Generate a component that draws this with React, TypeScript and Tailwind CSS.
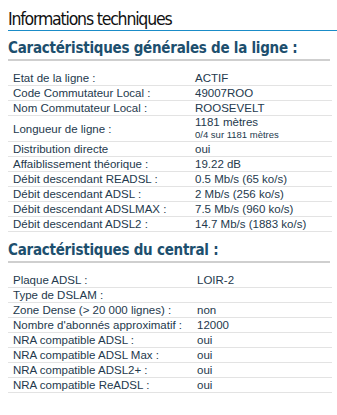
const ligne: [string, React.ReactNode][] = [
  ["Etat de la ligne :", "ACTIF"],
  ["Code Commutateur Local :", "49007ROO"],
  ["Nom Commutateur Local :", "ROOSEVELT"],
  [
    "Longueur de ligne :",
    <div className="leading-[13px]">
      <div>1181 mètres</div>
      <div className="text-[9.5px] leading-[12px]">0/4 sur 1181 mètres</div>
    </div>,
  ],
  ["Distribution directe", "oui"],
  ["Affaiblissement théorique :", "19.22 dB"],
  ["Débit descendant READSL :", "0.5 Mb/s (65 ko/s)"],
  ["Débit descendant ADSL :", "2 Mb/s (256 ko/s)"],
  ["Débit descendant ADSLMAX :", "7.5 Mb/s (960 ko/s)"],
  ["Débit descendant ADSL2 :", "14.7 Mb/s (1883 ko/s)"],
];

const central: [string, React.ReactNode][] = [
  ["Plaque ADSL :", "LOIR-2"],
  ["Type de DSLAM :", ""],
  ["Zone Dense (> 20 000 lignes) :", "non"],
  ["Nombre d'abonnés approximatif :", "12000"],
  ["NRA compatible ADSL :", "oui"],
  ["NRA compatible ADSL Max :", "oui"],
  ["NRA compatible ADSL2+ :", "oui"],
  ["NRA compatible ReADSL :", "oui"],
];

function InfoTable({
  rows,
  labelWidth,
}: {
  rows: [string, React.ReactNode][];
  labelWidth: string;
}) {
  return (
    <table className="mt-[10px] w-[324px] border-collapse text-[11.5px] leading-[14px] text-[#24394d]">
      <tbody>
        {rows.map(([label, value], i) => (
          <tr key={i} className="border-b border-[#e3e3e3]">
            <td className={`${labelWidth} h-[14px] p-0 pl-[5px] align-middle`}>
              {label}
            </td>
            <td className="p-0 align-middle">{value}</td>
          </tr>
        ))}
      </tbody>
    </table>
  );
}

const headingFont = { fontFamily: '"DejaVu Sans Condensed", "Noto Sans", sans-serif' };

export default function App() {
  return (
    <div
      className="h-[415px] w-[337px] bg-white pl-2 pt-[9px]"
      style={{ fontFamily: '"Liberation Sans", Arial, sans-serif' }}
    >
      <h1
        className="border-b border-[#1a8cc8] pb-[1px] text-[17.5px] leading-[20px] tracking-[-1.2px] text-[#111]"
        style={headingFont}
      >
        Informations techniques
      </h1>

      <h2
        className="mt-[8px] mr-[7px] border-b-2 border-[#cfcfcf] pb-[2px] text-[15px] font-bold leading-[18px] tracking-[-0.25px] text-[#1d4f6e]"
        style={headingFont}
      >
        Caractéristiques générales de la ligne :
      </h2>
      <InfoTable rows={ligne} labelWidth="w-[187px]" />

      <h2
        className="mt-[9px] mr-[7px] border-b-2 border-[#cfcfcf] pb-[2px] text-[15px] font-bold leading-[18px] tracking-[-0.25px] text-[#1d4f6e]"
        style={headingFont}
      >
        Caractéristiques du central :
      </h2>
      <InfoTable rows={central} labelWidth="w-[189px]" />
    </div>
  );
}
